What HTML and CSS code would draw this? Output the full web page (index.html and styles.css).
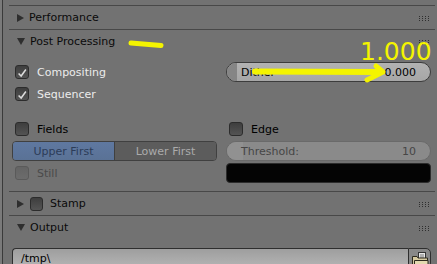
FILE: index.html
```html
<!DOCTYPE html>
<html lang="en">
<head>
  <meta charset="UTF-8">
  <title>Render Properties</title>
  <link rel="stylesheet" href="styles.css">
</head>
<body>
  <svg width="0" height="0" class="defs">
    <defs>
      <g id="grip">
        <rect x="0" y="0" width="1" height="1" /><rect x="3" y="0" width="1" height="1" /><rect x="6" y="0" width="1" height="1" /><rect x="9" y="0" width="1" height="1" />
        <rect x="0" y="2" width="1" height="1" /><rect x="3" y="2" width="1" height="1" /><rect x="6" y="2" width="1" height="1" /><rect x="9" y="2" width="1" height="1" />
        <rect x="0" y="4" width="1" height="1" /><rect x="3" y="4" width="1" height="1" /><rect x="6" y="4" width="1" height="1" /><rect x="9" y="4" width="1" height="1" />
      </g>
    </defs>
  </svg>

  <div class="region">
    <section class="panel">
      <div class="panel-header">
        <svg class="tri" width="7" height="8" viewBox="0 0 7 8"><polygon points="0,0 7,4 0,8" /></svg>
        <span class="title">Performance</span>
        <svg class="grip" width="10" height="5" viewBox="0 0 10 5"><use href="#grip" /></svg>
      </div>
    </section>

    <section class="panel">
      <div class="panel-header">
        <svg class="tri" width="8" height="7" viewBox="0 0 8 7"><polygon points="0,0 8,0 4,7" /></svg>
        <span class="title">Post Processing</span>
        <svg class="grip" width="10" height="5" viewBox="0 0 10 5"><use href="#grip" /></svg>
      </div>
      <div class="panel-body cols">
        <div class="col">
          <div class="check on">
            <span class="box"><svg width="14" height="14" viewBox="0 0 14 14"><path d="M3 7.5 L6 10.5 L11.5 3" /></svg></span>
            <span>Compositing</span>
          </div>
          <div class="check on">
            <span class="box"><svg width="14" height="14" viewBox="0 0 14 14"><path d="M3 7.5 L6 10.5 L11.5 3" /></svg></span>
            <span>Sequencer</span>
          </div>
          <div class="check split">
            <span class="box"></span>
            <span>Fields</span>
          </div>
          <div class="segmented">
            <span class="seg active">Upper First</span>
            <span class="seg">Lower First</span>
          </div>
          <div class="check disabled">
            <span class="box"></span>
            <span>Still</span>
          </div>
        </div>
        <div class="col">
          <div class="slider">
            <span class="slider-fill"></span>
            <span class="slider-label">Dither</span>
            <span class="slider-value">0.000</span>
          </div>
          <div class="row"></div>
          <div class="check split">
            <span class="box"></span>
            <span>Edge</span>
          </div>
          <div class="slider dim">
            <span class="slider-fill"></span>
            <span class="slider-label">Threshold:</span>
            <span class="slider-value">10</span>
          </div>
          <div class="swatch"></div>
        </div>
      </div>
    </section>

    <section class="panel">
      <div class="panel-header">
        <svg class="tri" width="7" height="8" viewBox="0 0 7 8"><polygon points="0,0 7,4 0,8" /></svg>
        <span class="box header-box"></span>
        <span class="title">Stamp</span>
        <svg class="grip" width="10" height="5" viewBox="0 0 10 5"><use href="#grip" /></svg>
      </div>
    </section>

    <section class="panel">
      <div class="panel-header">
        <svg class="tri" width="8" height="7" viewBox="0 0 8 7"><polygon points="0,0 8,0 4,7" /></svg>
        <span class="title">Output</span>
        <svg class="grip" width="10" height="5" viewBox="0 0 10 5"><use href="#grip" /></svg>
      </div>
      <div class="panel-body">
        <div class="path-row">
          <div class="path-field">/tmp\</div>
          <div class="browse">
            <svg width="18" height="16" viewBox="0 0 18 16">
              <rect x="7.5" y="1.5" width="7" height="8" fill="#e8e8e8" stroke="#333" />
              <line x1="9" y1="4" x2="13" y2="4" stroke="#777" />
              <line x1="9" y1="6" x2="13" y2="6" stroke="#777" />
              <path d="M1.5 5.5 H6 L7 7 H16.5 V16 H1.5 Z" fill="#d6caa0" stroke="#2e2a1e" />
              <path d="M3.5 9.5 H17 V16 H3.5 Z" fill="#e4d9b0" stroke="#2e2a1e" />
            </svg>
          </div>
        </div>
      </div>
    </section>
  </div>

  <svg class="annotation" width="437" height="264" viewBox="0 0 437 264">
    <line x1="131" y1="43" x2="161" y2="45.5" stroke="#f4f400" stroke-width="5" stroke-linecap="round" />
    <path d="M255 71.5 L380 72" stroke="#f4f400" stroke-width="6" stroke-linecap="round" fill="none" />
    <path d="M376 66 L383 72 L367 80" stroke="#f4f400" stroke-width="5" stroke-linecap="round" stroke-linejoin="round" fill="none" />
    <text x="360" y="60" class="note">1.000</text>
  </svg>
</body>
</html>
```

FILE: styles.css
```css
* {
  margin: 0;
  padding: 0;
  box-sizing: border-box;
}
body {
  width: 437px;
  height: 264px;
  overflow: hidden;
  position: relative;
  background: #7a7a7a;
  font-family: 'DejaVu Sans', sans-serif;
  font-size: 11px;
  color: #000;
}
.defs {
  position: absolute;
}
.region {
  height: 264px;
  margin-left: 2px;
  border-left: 1px solid #3a3a3a;
  background: #727272;
  padding: 5px 2px 0 6px;
}
.panel {
  border-top: 1px solid #484848;
}
.panel-header {
  height: 23px;
  display: flex;
  align-items: center;
  padding-left: 8px;
  padding-right: 6px;
}
.tri {
  fill: #2e2e2e;
  margin-right: 5px;
  flex-shrink: 0;
}
.title {
  color: #0a0a0a;
}
.grip {
  margin-left: auto;
  margin-top: 2px;
  fill: #2f2f2f;
}
.panel-body {
  padding: 9px 4px 8px 3px;
}
.cols {
  display: grid;
  grid-template-columns: 205px 205px;
  column-gap: 9px;
}
.col {
  display: flex;
  flex-direction: column;
  gap: 2px;
}
.row {
  height: 20px;
}
.check {
  height: 20px;
  display: flex;
  align-items: center;
  padding-left: 3px;
  gap: 8px;
}
.check.split {
  margin-top: 13px;
}
.box {
  width: 14px;
  height: 14px;
  border-radius: 3px;
  border: 1px solid #2c2c2c;
  background: linear-gradient(#3e3e3e, #545454);
  flex-shrink: 0;
  display: flex;
}
.box svg path {
  fill: none;
  stroke: #dcdcdc;
  stroke-width: 1.8;
}
.check.on {
  color: #ececec;
}
.check.disabled {
  color: #4a4a4a;
}
.check.disabled .box {
  border-color: #5a5a5a;
  background: linear-gradient(#646464, #6c6c6c);
}
.header-box {
  margin-left: 1px;
  margin-right: 7px;
  width: 13px;
  height: 14px;
}
.segmented {
  height: 20px;
  display: flex;
  border: 1px solid #404040;
  border-radius: 4px;
  overflow: hidden;
}
.seg {
  flex: 1;
  display: flex;
  align-items: center;
  justify-content: center;
  background: #5c5c5c;
  color: #ababab;
}
.seg.active {
  background: linear-gradient(#5f78a0, #5a7296);
  color: #2c3c58;
  border-right: 1px solid #404040;
}
.slider {
  height: 20px;
  position: relative;
  display: flex;
  align-items: center;
  padding: 0 14px 0 14px;
  border: 1px solid #3c3c3c;
  border-radius: 10px;
  overflow: hidden;
  background: linear-gradient(#b2b2b2, #a6a6a6);
}
.slider-fill {
  position: absolute;
  left: 0;
  top: 0;
  bottom: 0;
  width: 10px;
  background: #858585;
}
.slider-label,
.slider-value {
  position: relative;
}
.slider-value {
  margin-left: auto;
}
.slider.dim {
  border-color: #6a6a6a;
  background: #8a8a8a;
  color: #464646;
}
.slider.dim .slider-fill {
  width: 16px;
  background: #919191;
}
.swatch {
  height: 20px;
  background: #040404;
  border: 1px solid #2c2c2c;
  border-radius: 4px;
}
.path-row {
  display: flex;
  height: 20px;
}
.path-field {
  width: 399px;
  padding-left: 8px;
  display: flex;
  align-items: center;
  border: 1px solid #2e2e2e;
  border-right: none;
  border-radius: 4px 0 0 4px;
  background: linear-gradient(#9e9e9e, #b4b4b4);
}
.browse {
  width: 23px;
  display: flex;
  align-items: flex-start;
  justify-content: center;
  padding-top: 2px;
  border: 1px solid #2e2e2e;
  border-radius: 0 5px 5px 0;
  background: #888;
}
.annotation {
  position: absolute;
  left: 0;
  top: 0;
  pointer-events: none;
}
.note {
  fill: #f4f400;
  font-family: 'DejaVu Sans', sans-serif;
  font-size: 25px;
}
```
